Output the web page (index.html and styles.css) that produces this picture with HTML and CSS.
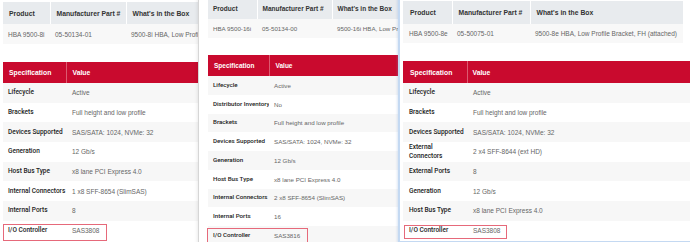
FILE: index.html
```html
<!DOCTYPE html>
<html>
<head>
<meta charset="utf-8">
<link rel="stylesheet" href="styles.css">
</head>
<body>
<section class="win win1">
  <table class="prod">
    <colgroup><col class="pc1"><col class="pc2"><col></colgroup>
    <thead><tr><th>Product</th><th>Manufacturer Part #</th><th>What's in the Box</th></tr></thead>
    <tbody><tr><td>HBA 9500-8i</td><td>05-50134-01</td><td>9500-8i HBA, Low Profile Bracket, FH (attached)</td></tr></tbody>
  </table>
  <table class="spec">
    <colgroup><col class="sc1"><col></colgroup>
    <thead><tr><th>Specification</th><th>Value</th></tr></thead>
    <tbody>
      <tr><td>Lifecycle</td><td>Active</td></tr>
      <tr><td>Brackets</td><td>Full height and low profile</td></tr>
      <tr><td>Devices Supported</td><td>SAS/SATA: 1024, NVMe: 32</td></tr>
      <tr><td>Generation</td><td>12 Gb/s</td></tr>
      <tr><td>Host Bus Type</td><td>x8 lane PCI Express 4.0</td></tr>
      <tr><td>Internal Connectors</td><td>1 x8 SFF-8654 (SlimSAS)</td></tr>
      <tr><td>Internal Ports</td><td>8</td></tr>
      <tr><td>I/O Controller</td><td>SAS3808</td></tr>
    </tbody>
  </table>
</section>

<section class="win win2">
  <table class="prod">
    <colgroup><col class="pc1"><col class="pc2"><col></colgroup>
    <thead><tr><th>Product</th><th>Manufacturer Part #</th><th>What's in the Box</th></tr></thead>
    <tbody><tr><td>HBA 9500-16i</td><td>05-50134-00</td><td>9500-16i HBA, Low Profile Bracket, FH (attached)</td></tr></tbody>
  </table>
  <table class="spec">
    <colgroup><col class="sc1"><col></colgroup>
    <thead><tr><th>Specification</th><th>Value</th></tr></thead>
    <tbody>
      <tr><td>Lifecycle</td><td>Active</td></tr>
      <tr><td>Distributor Inventory</td><td>No</td></tr>
      <tr><td>Brackets</td><td>Full height and low profile</td></tr>
      <tr><td>Devices Supported</td><td>SAS/SATA: 1024, NVMe: 32</td></tr>
      <tr><td>Generation</td><td>12 Gb/s</td></tr>
      <tr><td>Host Bus Type</td><td>x8 lane PCI Express 4.0</td></tr>
      <tr><td>Internal Connectors</td><td>2 x8 SFF-8654 (SlimSAS)</td></tr>
      <tr><td>Internal Ports</td><td>16</td></tr>
      <tr><td>I/O Controller</td><td>SAS3816</td></tr>
    </tbody>
  </table>
</section>

<section class="win win3">
  <table class="prod">
    <colgroup><col class="pc1"><col class="pc2"><col></colgroup>
    <thead><tr><th>Product</th><th>Manufacturer Part #</th><th>What's in the Box</th></tr></thead>
    <tbody><tr><td>HBA 9500-8e</td><td>05-50075-01</td><td>9500-8e HBA, Low Profile Bracket, FH (attached)</td></tr></tbody>
  </table>
  <table class="spec">
    <colgroup><col class="sc1"><col></colgroup>
    <thead><tr><th>Specification</th><th>Value</th></tr></thead>
    <tbody>
      <tr><td>Lifecycle</td><td>Active</td></tr>
      <tr><td>Brackets</td><td>Full height and low profile</td></tr>
      <tr><td>Devices Supported</td><td>SAS/SATA: 1024, NVMe: 32</td></tr>
      <tr><td>External<br>Connectors</td><td>2 x4 SFF-8644 (ext HD)</td></tr>
      <tr><td>External Ports</td><td>8</td></tr>
      <tr><td>Generation</td><td>12 Gb/s</td></tr>
      <tr><td>Host Bus Type</td><td>x8 lane PCI Express 4.0</td></tr>
      <tr><td>I/O Controller</td><td>SAS3808</td></tr>
    </tbody>
  </table>
</section>

<div class="mark mark1"></div>
<div class="mark mark2"></div>
<div class="mark mark3"></div>
</body>
</html>
```

FILE: styles.css
```css
html, body {
  margin: 0;
  padding: 0;
}
body {
  width: 690px;
  height: 242px;
  overflow: hidden;
  position: relative;
  background: #fff;
  font-family: "Liberation Sans", Arial, sans-serif;
}

.win {
  position: absolute;
  background: #fff;
  overflow: hidden;
}

.win1 {
  left: 0;
  top: 0;
  width: 199px;
  height: 242px;
  padding: 2px 0 0 3px;
  box-sizing: border-box;
}
.win2 {
  left: 198px;
  top: -2px;
  width: 191px;
  height: 250px;
  padding: 0 0 0 9px;
  border-left: 1px solid #d6d6d6;
  box-shadow: -1px 0 3px rgba(0, 0, 0, 0.08);
}
.win3 {
  left: 398px;
  top: -10px;
  width: 289px;
  padding: 11px 0 0 3px;
  border-left: 2px solid #c4d9f2;
  border-bottom: 2px solid #c4d9f2;
  box-shadow: -1px 0 2px rgba(120, 160, 210, 0.25);
}

table {
  border-collapse: collapse;
  table-layout: fixed;
}
td, th {
  white-space: nowrap;
  overflow: hidden;
  text-align: left;
  vertical-align: middle;
  padding-top: 0;
  padding-bottom: 0;
}

/* product tables */
.prod th {
  background: #e8ebee;
  color: #333;
  font-weight: bold;
  font-size: 6.8px;
  height: 22px;
  padding-left: 6px;
  border-left: 1px solid #fff;
}
.prod th:first-child { border-left: 0; }
.prod td {
  background: #f8f8f8;
  color: #666;
  font-size: 6.5px;
  height: 20px;
  padding-left: 5px;
}

/* spec tables */
.spec { margin-top: 18px; }
.spec th {
  background: #c90a2e;
  color: #fff;
  font-weight: bold;
  font-size: 6.8px;
  height: 21px;
  padding-left: 6px;
  border-left: 1px solid #dc5a70;
}
.spec th:first-child { border-left: 0; }
.spec td {
  height: 19.7px;
  font-size: 6.5px;
  line-height: 9px;
  color: #666;
  padding-left: 6px;
}
.spec td:first-child {
  font-family: Roboto, "Liberation Sans", Arial, sans-serif;
  font-weight: 500;
  color: #222;
  font-size: 6.5px;
  padding-left: 5px;
}
.spec tbody tr:nth-child(odd) td { background: #f7f7f7; }

/* panel 1 columns */
.win1 .prod { width: 330px; }
.win1 .pc1 { width: 47px; }
.win1 .pc2 { width: 76px; }
.win1 .spec { width: 417px; }
.win1 .sc1 { width: 63px; }

/* panel 2 (slightly smaller capture) */
.win2 .prod { width: 250px; }
.win2 .pc1 { width: 49px; }
.win2 .pc2 { width: 75px; }
.win2 .prod th { height: 21px; font-size: 6.5px; padding-left: 5px; }
.win2 .prod td { height: 19px; font-size: 6.2px; padding-left: 5px; }
.win2 .spec { width: 250px; margin-top: 17px; }
.win2 .sc1 { width: 61px; }
.win2 .spec th { height: 21px; font-size: 6.5px; }
.win2 .spec td { height: 18.75px; font-size: 6.2px; padding-left: 5px; }
.win2 .spec td:first-child { font-size: 6.2px; }

/* panel 3 */
.win3 .prod { width: 280px; }
.win3 .pc1 { width: 49px; }
.win3 .pc2 { width: 78px; }
.win3 .prod th { height: 23px; padding-left: 6px; }
.win3 .prod th:first-child { padding-left: 7px; }
.win3 .prod td { height: 19px; }
.win3 .prod td:first-child { padding-left: 6px; }
.win3 .spec { width: 300px; }
.win3 .sc1 { width: 64px; }
.win3 .spec th { height: 22px; padding-left: 7px; }
.win3 .spec th + th { padding-left: 5px; }
.win3 .spec td:first-child { padding-left: 6px; }

/* red annotation boxes drawn over the screenshots */
.mark {
  position: absolute;
  border: 1px solid #e6697a;
  box-sizing: border-box;
}
.mark1 { left: 3px; top: 224px; width: 104px; height: 17px; }
.mark2 { left: 207px; top: 228px; width: 101px; height: 20px; }
.mark3 { left: 404px; top: 225px; width: 103px; height: 14px; }
```
